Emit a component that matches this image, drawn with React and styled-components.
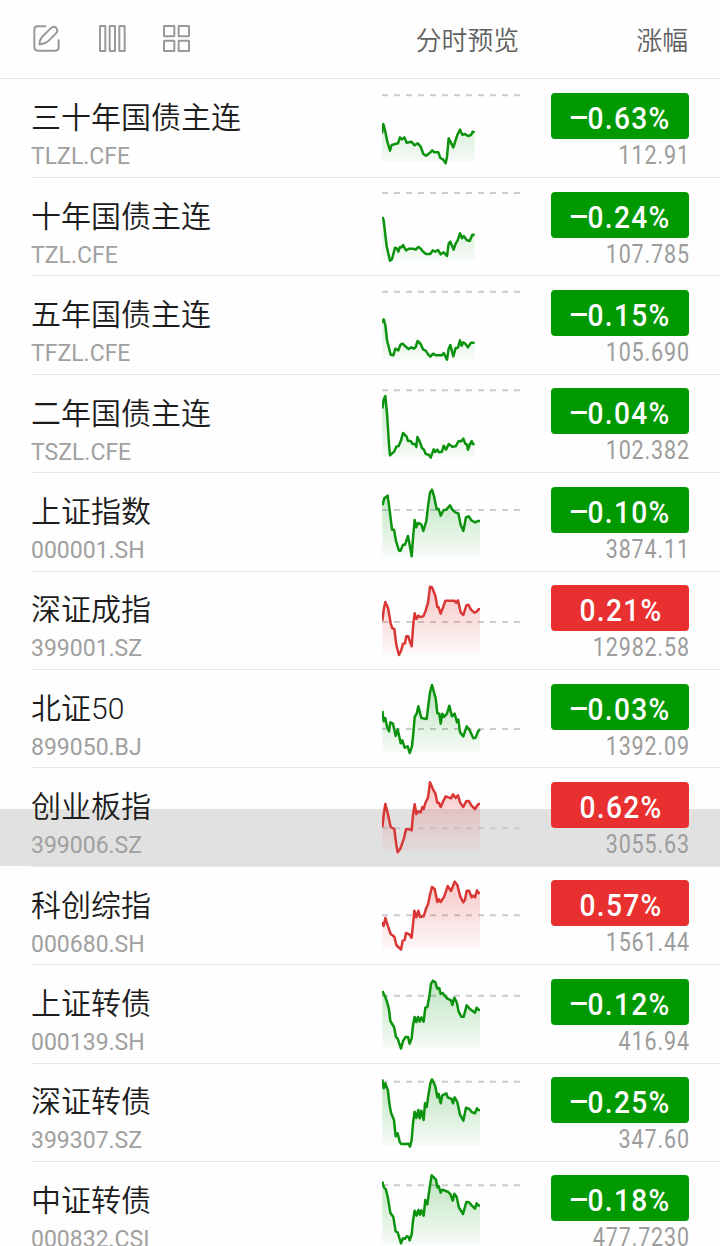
import React from 'react'
import styled, { createGlobalStyle } from "styled-components"

// chart points are in thirds of a pixel, measured from the top left of the row
const quotes = [
  {
    name: "三十年国债主连", code: "TLZL.CFE", change: -0.63, price: "112.91", base: 49,
    line: "0,163 4,135 9,153 16,188 24,215 29,198 48,193 54,175 60,181 67,175 74,191 88,188 98,199 107,193 116,203 124,225 132,230 144,221 151,214 157,220 169,220 175,237 183,241 191,253 195,233 200,178 214,205 226,168 234,152 241,167 249,165 258,171 267,168 272,158 278,160"
  },
  {
    name: "十年国债主连", code: "TZL.CFE", change: -0.24, price: "107.785", base: 48,
    line: "1,120 5,130 14,208 24,251 30,246 39,212 45,215 49,224 54,210 59,211 63,204 72,220 81,215 94,215 101,218 109,210 115,214 122,223 132,231 145,231 152,220 160,224 168,219 176,232 185,226 195,237 200,200 205,194 215,218 221,200 227,190 234,169 240,184 245,177 255,190 263,192 271,173 278,174"
  },
  {
    name: "五年国债主连", code: "TFZL.CFE", change: -0.15, price: "105.690", base: 47,
    line: "1,140 5,130 10,147 15,192 26,236 34,238 40,218 49,223 56,205 62,203 70,211 80,219 88,214 96,218 101,213 107,195 116,204 123,220 131,224 139,236 145,242 153,233 162,238 179,238 185,231 195,251 200,218 205,207 214,241 221,216 228,215 234,193 239,209 244,199 250,203 258,214 267,200 278,200"
  },
  {
    name: "二年国债主连", code: "TSZL.CFE", change: -0.04, price: "102.382", base: 49,
    line: "1,104 5,77 10,66 15,117 21,212 24,244 37,232 43,218 50,216 57,199 63,177 74,188 78,201 86,201 92,210 99,210 103,219 106,189 113,202 120,222 126,227 131,240 140,242 146,251 155,226 160,234 166,227 171,235 180,233 185,215 192,227 200,210 211,218 221,217 230,201 238,202 244,194 250,209 255,212 258,227 264,210 269,201 272,210 278,210"
  },
  {
    name: "上证指数", code: "000001.SH", change: -0.1, price: "3874.11", base: 111,
    line: "1,97 7,76 17,68 23,112 30,170 36,170 42,204 51,233 56,233 63,215 69,215 78,189 83,215 89,250 93,197 98,141 103,163 108,150 118,154 124,174 133,144 138,100 144,59 150,50 156,69 164,109 170,108 176,128 185,111 193,110 204,97 211,110 220,118 229,121 236,155 244,174 252,133 260,130 269,143 280,148 287,144 294,144"
  },
  {
    name: "深证成指", code: "399001.SZ", change: 0.21, price: "12982.58", base: 153,
    line: "1,149 5,117 10,93 18,110 26,157 31,172 37,174 43,222 51,252 57,240 63,218 69,217 73,196 79,196 83,210 89,226 94,157 98,127 103,144 109,134 115,138 124,136 131,119 138,95 144,47 150,49 160,74 166,108 170,109 176,128 183,110 190,89 217,89 222,95 228,88 236,124 244,132 253,103 259,101 267,116 277,125 285,121 289,115 294,115"
  },
  {
    name: "北证50", code: "899050.BJ", change: -0.03, price: "1392.09", base: 180,
    line: "1,126 5,157 10,147 15,173 21,187 25,160 33,164 41,201 47,181 56,223 61,214 68,236 77,232 83,252 90,232 94,193 98,144 104,134 109,112 118,147 134,150 139,109 144,70 150,48 161,88 166,133 172,134 176,164 181,134 186,144 195,134 202,110 210,142 218,134 225,160 229,152 234,190 244,202 254,172 263,184 274,208 281,206 288,187 294,181"
  },
  {
    name: "创业板指", code: "399006.SZ", change: 0.62, price: "3055.63", base: 181, shaded: true,
    line: "1,178 5,141 10,108 18,139 26,177 37,183 43,231 47,253 55,242 66,211 72,184 81,184 89,187 93,141 98,109 103,138 108,130 116,133 121,117 125,123 130,105 138,89 144,43 154,66 160,76 166,104 171,105 176,117 183,101 191,85 207,91 213,79 221,90 228,82 235,105 244,117 253,99 261,100 268,112 279,123 288,109 294,107"
  },
  {
    name: "科创综指", code: "000680.SH", change: 0.57, price: "1561.44", base: 148,
    line: "1,168 5,180 10,156 17,178 26,204 37,212 43,237 57,251 62,224 68,222 72,201 82,205 89,215 93,176 97,134 103,154 109,134 114,153 125,151 132,128 138,115 144,86 150,63 158,69 166,108 171,100 176,108 186,93 192,76 197,60 207,75 218,47 226,57 235,92 244,109 249,101 254,74 261,74 269,94 273,89 279,94 285,73 289,81 294,80"
  },
  {
    name: "上证转债", code: "000139.SH", change: -0.12, price: "416.94", base: 92,
    line: "1,78 10,96 16,114 21,133 25,168 36,186 42,216 47,221 57,251 63,228 71,216 78,216 83,236 89,220 93,181 98,156 103,171 108,156 113,170 118,157 125,170 130,128 136,126 142,94 147,56 153,47 160,52 166,71 172,69 176,87 182,84 196,101 207,106 211,120 217,98 224,111 230,140 238,155 245,155 254,121 263,131 279,143 284,128 289,134 294,135"
  },
  {
    name: "深证转债", code: "399307.SZ", change: -0.25, price: "347.60", base: 56,
    line: "1,49 5,76 10,61 18,83 22,121 27,149 36,171 41,220 47,211 53,236 58,243 80,242 84,251 89,231 93,181 98,146 103,165 109,141 113,166 118,143 125,171 129,121 134,132 140,91 145,61 150,49 160,70 166,103 170,93 176,121 181,97 193,91 197,103 209,108 213,121 218,103 226,117 234,155 244,173 252,134 262,138 269,147 279,151 285,136 289,141 294,142"
  },
  {
    name: "中证转债", code: "000832.CSI", change: -0.18, price: "477.7230", base: 73,
    line: "1,62 5,77 12,86 18,112 25,155 34,168 41,211 47,214 57,247 63,232 69,233 74,226 79,227 83,238 89,220 93,180 98,149 104,164 109,147 114,161 118,148 125,164 130,117 136,130 143,80 149,43 162,56 166,79 170,75 176,95 181,86 199,93 206,101 212,119 217,98 224,108 231,140 243,159 253,123 261,124 269,133 279,143 284,127 289,133 294,134"
  },
]

const Sparkline = ({ line, base, up }) => {
  const points = line.split(" ")
  const startX = points[0].split(",")[0]
  const endX = points[points.length - 1].split(",")[0]
  const fill = up ? "fadeUp" : "fadeDown"
  return (
    <Chart viewBox="0 0 414 294">
      <defs>
        <linearGradient id={fill} gradientUnits="userSpaceOnUse" x1="0" y1="45" x2="0" y2="250">
          <stop offset="0" stopColor={up ? "#e83030" : "#079a10"} stopOpacity="0.27"/>
          <stop offset="1" stopColor={up ? "#e83030" : "#079a10"} stopOpacity="0.03"/>
        </linearGradient>
      </defs>
      <BaseLine d={`M0 ${base}H414`}/>
      <polygon points={`${startX},250 ${line} ${endX},250`} fill={`url(#${fill})`}/>
      <Trend points={line} $up={up}/>
    </Chart>
  )
}

const App = () => {
  return (
    <Page>
      <GlobalStyle/>
      <Header>
        <Tools>
          <Icon viewBox="0 0 81 81">
            <path d="M37 4H14Q4 4 4 14V67Q4 77 14 77H67Q77 77 77 67V46"/>
            <path d="M19 58Q20 44 27 36L52 11Q61 2 69 8Q77 16 69 25L45 49Q36 57 19 58Z"/>
          </Icon>
          <Icon viewBox="0 0 81 81">
            <rect x="3" y="3" width="16" height="75" rx="1"/>
            <rect x="32" y="3" width="16" height="75" rx="1"/>
            <rect x="61" y="3" width="16" height="75" rx="1"/>
          </Icon>
          <Icon viewBox="0 0 81 81">
            <rect x="3" y="3" width="31" height="31" rx="1"/>
            <rect x="47" y="3" width="31" height="31" rx="1"/>
            <rect x="3" y="47" width="31" height="31" rx="1"/>
            <rect x="47" y="47" width="31" height="31" rx="1"/>
          </Icon>
        </Tools>
        <Heading>分时预览</Heading>
        <Heading>涨幅</Heading>
      </Header>
      {
        quotes.map((props)=>(
          <Row key={props.code} $shaded={props.shaded}>
            <Content>
              <Info>
                <Name>{props.name}</Name>
                <Code>{props.code}</Code>
              </Info>
              <Sparkline line={props.line} base={props.base} up={props.change > 0}/>
              <Figures>
                <Change $up={props.change > 0}>
                  {props.change < 0 && <Minus>−</Minus>}
                  <Percent>{Math.abs(props.change).toFixed(2)}%</Percent>
                </Change>
                <Price>{props.price}</Price>
              </Figures>
            </Content>
          </Row>
        ))
      }
    </Page>
  )
}

export default App

const GlobalStyle = createGlobalStyle`
  *{
    box-sizing: border-box;
  }
  body{
    margin: 0;
    background-color: #fefefe;
  }
`
const Page = styled.div`
  width: 720px;
  height: 1246px;
  overflow: hidden;
  background-color: #fefefe;
  font-family: Roboto, "Noto Sans CJK SC", sans-serif;
`
const Header = styled.div`
  height: 79.1px;
  display: grid;
  grid-template-columns: 1fr 104px 169px;
  align-items: center;
  padding: 0 32px 0 33px;
  border-bottom: 1px solid #e6e6e6;
`
const Tools = styled.div`
  display: flex;
  gap: 38px;
`
const Icon = styled.svg`
  width: 27px;
  height: 27px;
  margin-top: -1px;
  fill: none;
  stroke: #999;
  stroke-width: 6;
  stroke-linejoin: round;
  stroke-linecap: round;
  overflow: visible;

  &:nth-child(2){
    margin-left: 1px;
    margin-right: -1px;
  }
`
const Heading = styled.div`
  font-size: 25.8px;
  font-weight: 350;
  line-height: 38px;
  color: #606060;
  white-space: nowrap;
  text-align: right;
  margin-top: 3px;
`
const Row = styled.div`
  height: 98.4px;
  background: ${({ $shaded }) => $shaded ? "linear-gradient(transparent 40.8px, #e1e1e1 40.8px)" : "none"};
`
const Content = styled.div`
  height: 99px;
  margin-left: 31px;
  padding-right: 31px;
  display: grid;
  grid-template-columns: 351px 138px 1fr;
  border-bottom: 1px solid #e6e6e6;
`
const Info = styled.div`
  padding-top: 19.4px;
`
const Name = styled.div`
  font-size: 30px;
  font-weight: 350;
  line-height: 40px;
  color: #1c1c1c;
`
const Code = styled.div`
  margin-top: 5px;
  font-size: 23px;
  line-height: 28px;
  color: #a0a0a0;
`
const Chart = styled.svg`
  width: 138px;
  height: 98px;
`
const BaseLine = styled.path`
  stroke: #ccc;
  stroke-width: 6;
  stroke-dasharray: 18 18;
`
const Trend = styled.polyline`
  fill: none;
  stroke: ${({ $up }) => $up ? "#d93636" : "#0c930e"};
  stroke-width: 7.5;
  stroke-linejoin: round;
`
const Figures = styled.div`
  padding-top: 14.1px;
  display: flex;
  flex-direction: column;
  align-items: flex-end;
`
const Change = styled.div`
  width: 138px;
  height: 46px;
  display: flex;
  justify-content: center;
  align-items: center;
  padding-top: 4px;
  border-radius: 4px;
  color: white;
  background-color: ${({ $up }) => $up ? "#e93030" : "#009900"};
  font-size: 32px;
  font-weight: 500;
`
const Minus = styled.span`
  width: 17px;
  display: flex;
  justify-content: center;
  transform: translateX(-1px) scaleX(1.2);
`
const Percent = styled.span`
  width: 82px;
  display: flex;
  justify-content: center;
  letter-spacing: 1.5px;
  margin-right: -1px;
  transform: scaleX(0.88);
`
const Price = styled.div`
  margin-top: 3px;
  font-size: 25px;
  font-weight: 450;
  line-height: 28px;
  letter-spacing: 1px;
  margin-right: -1px;
  color: #9c9c9c;
  transform: scaleX(0.86);
  transform-origin: right;
`
